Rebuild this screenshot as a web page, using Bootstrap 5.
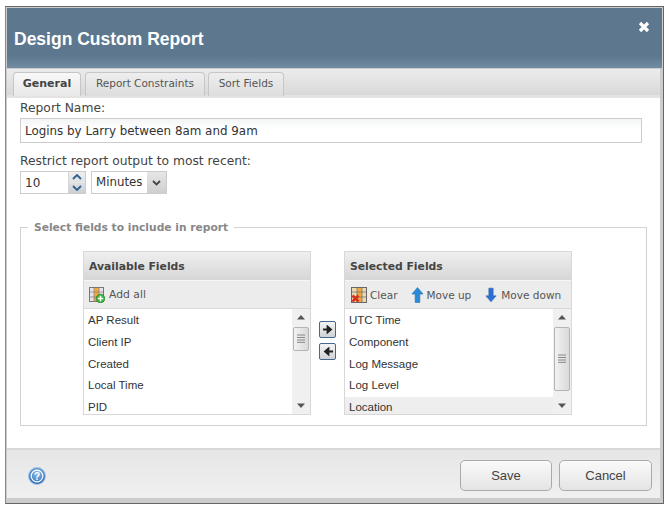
<!DOCTYPE html>
<html lang="en">
<head>
<meta charset="utf-8">
<title>Design Custom Report</title>
<link rel="stylesheet" href="https://cdn.jsdelivr.net/npm/bootstrap@5.3.0/dist/css/bootstrap.min.css">
<style>
html,body{background:#fff;margin:0;height:508px;overflow:hidden}
body{font-family:"DejaVu Sans",sans-serif;font-size:11.5px;color:#333;padding:6px 5px 0 5px}
.dlg-win{width:659px;height:498px;border:1px solid #666;border-left-color:#888;padding:1px 3px 4px 1px;background:#ccc}
.dlg-head{height:60px;margin-right:-2px;background:linear-gradient(#5c778e 0,#5c778e 80%,#718ca3 100%);color:#fff;padding:0 12px 0 7px}
.dlg-title{font:700 17.5px "Liberation Sans",sans-serif;margin:21px 0 0;line-height:20px}
.dlg-close{margin-top:11px;width:12px;height:16px}
.tab-bar{height:29px;padding:3px 0 0 6px;margin-top:1px;background:linear-gradient(#ececec,#d8d8d8);border-bottom:3px solid #e3e3e3;gap:3px}
.tab-bar .nav-link{height:24px;margin:0;border:1px solid #c6c6c6;border-bottom:0;border-radius:4px 4px 0 0;padding:0;width:120px;text-align:center;line-height:21px;font-size:10.500px;color:#555;background:linear-gradient(#eee,#ddd)}
.tab-bar .nav-link.active{font-weight:700;background:linear-gradient(#f8f8f8,#e8e8e8);color:#444;width:68px;font-size:11px;margin-right:1px}
.tab-bar .nav-link.tab-sort{width:76px}
.dlg-body{background:#fff;padding:0 12px 0 13px;height:350px}
.fld-label{display:block;font-size:12.300px;line-height:16px;margin:0;color:#444;height:20px;padding-top:2px}
.txt-field.form-control{height:25px;width:622px;border:1px solid #ccc;border-radius:0;padding:0 4px;font-size:11.900px;color:#333;background:linear-gradient(#f3f5f4,#fff 45%);box-shadow:none}
.report-label{margin-top:8px}
.spin-row{height:23px;margin-top:0;gap:5px}
.spin-box{width:66px;height:23px;border:1px solid #ccc}
.spin-in.form-control{width:47px;height:21px;border:0;border-radius:0;padding:0 4px;font-size:12px;color:#333}
.spin-btns{width:18px;border-left:1px solid #d5d5d5;background:linear-gradient(#efefef,#ccd0d3)}
.spin-btns button{flex:1;border:0;background:none;padding:0;display:flex;align-items:center;justify-content:center;line-height:0}
.spin-btns button+button{border-top:1px solid #e8e8e8}
.unit-sel.form-select{width:76px;height:23px;border:1px solid #ccc;border-radius:0;padding:1px 0 0 4px;font-size:11.800px;color:#333;background-color:#fff;background-repeat:no-repeat;background-image:url("data:image/svg+xml,%3Csvg xmlns='http://www.w3.org/2000/svg' width='9' height='6'%3E%3Cpath d='M1 1l3.500 3.500L8 1' fill='none' stroke='%23444' stroke-width='1.800'/%3E%3C/svg%3E"),linear-gradient(#e6e6e6,#cfcfcf);background-position:right 5px center,right top;background-size:9px 6px,19px 100%}
.field-set{margin:33px 0 0 0;width:627px;height:199px;border:1px solid #d2d2d2;padding:23px 0 0 62px;position:relative}
.field-cap{position:absolute;left:7px;top:-8px;margin:0;padding:0 6px;width:auto;float:none;background:#fff;font-size:10.700px;font-weight:700;color:#888;line-height:16px}
.pick-card.card{width:228px;height:164px;border:1px solid #d8d8d8;border-radius:0;background:#fff;overflow:hidden}
.pick-head.card-header{height:28px;border:0;border-radius:0;padding:1px 5px 0;line-height:28px;font-weight:700;font-size:10.800px;color:#444;background:linear-gradient(#efefef,#d6d6d6)}
.pick-tools{height:29px;border-top:1px solid #f6f6f6;border-bottom:1px solid #d8d8d8;background:#ececec;padding:1px 5px 0;color:#555;font-size:10.800px}
.pick-tools.sel-tools{padding:1px 0 0 6px;font-size:10.500px}
.tool-item{line-height:14px}
.tool-clear{gap:3px}
.tool-up{margin-left:14px;gap:2px}
.tool-down{margin-left:14px;gap:4px}
.pick-list{height:106px;overflow:hidden}
.pick-rows{list-style:none;margin:0;padding:1.500px 0 0;flex:1;min-width:0;overflow:hidden;font:11.500px/21.700px "Liberation Sans",sans-serif;color:#333}
.pick-rows li{padding:0 4px;height:21.700px}
.pick-rows li.is-on{background:#eee}
.fake-bar{width:18px;background:#f0f0f0;padding:0}
.bar-end{height:18px;line-height:0}
.bar-lane{flex:1;min-height:0}
.bar-thumb{width:16px;margin:0 auto;border:1px solid #b4b4b4;border-radius:2px;background:linear-gradient(90deg,#f2f2f2,#d9d9d9);display:flex;align-items:center;justify-content:center}
.move-col{width:17px;gap:5px;margin:70px 8px 0}
.move-btn{width:17px;height:17px;border:1px solid #46688f;border-radius:2px;padding:0;background:linear-gradient(#f4f4f4,#cfd3d6);line-height:0;display:flex;align-items:center;justify-content:center}
.dlg-foot{height:50px;background:linear-gradient(#e6e6e6,#f0f0f0);border-top:2px solid #d8d8d8;margin-top:0;padding:3px 8px 0 20px}
.foot-btn.btn{height:31px;padding:0;border:1px solid #aaa;border-radius:5px;font:13px "Liberation Sans",sans-serif;color:#444;background:linear-gradient(#fafafa,#e4e4e4)}
.btn-save{width:92px}
.btn-cancel{width:93px}
.foot-gap{gap:7px}
</style>
</head>
<body>
<div class="dlg-win d-flex flex-column">
  <div class="dlg-head d-flex justify-content-between align-items-start">
    <h1 class="dlg-title">Design Custom Report</h1>
    <svg class="dlg-close" viewBox="0 0 12 16" aria-label="Close"><path d="M2 4l8 8M10 4l-8 8" stroke="#fff" stroke-width="3.200" fill="none"/></svg>
  </div>
  <ul class="nav tab-bar">
    <li class="nav-item"><a class="nav-link active" href="#">General</a></li>
    <li class="nav-item"><a class="nav-link" href="#">Report Constraints</a></li>
    <li class="nav-item"><a class="nav-link tab-sort" href="#">Sort Fields</a></li>
  </ul>
  <div class="dlg-body">
    <label class="fld-label">Report Name:</label>
    <input class="form-control txt-field" value="Logins by Larry between 8am and 9am">
    <label class="fld-label report-label">Restrict report output to most recent:</label>
    <div class="d-flex spin-row">
      <div class="d-flex spin-box">
        <input class="form-control spin-in" value="10">
        <div class="spin-btns d-flex flex-column">
          <button type="button" aria-label="Up"><svg width="10" height="6"><path d="M1 5l4-4 4 4" fill="none" stroke="#2f5f8f" stroke-width="1.800"/></svg></button>
          <button type="button" aria-label="Down"><svg width="10" height="6"><path d="M1 1l4 4 4-4" fill="none" stroke="#2f5f8f" stroke-width="1.800"/></svg></button>
        </div>
      </div>
      <select class="form-select unit-sel"><option>Minutes</option></select>
    </div>
    <fieldset class="field-set">
      <legend class="field-cap">Select fields to include in report</legend>
      <div class="d-flex align-items-start">
        <div class="card pick-card">
          <div class="card-header pick-head">Available Fields</div>
          <div class="pick-tools d-flex align-items-center">
            <span class="tool-item d-flex align-items-center gap-1">
              <svg width="16" height="16" viewBox="0 0 16 16"><rect x=".5" y=".5" width="14" height="14" fill="#e4e4ee" stroke="#777"/><rect x="5" y="1" width="5" height="13" fill="#f5a63a"/><path d="M5 1v13M10 1v13M1 5h13M1 10h13" stroke="#888" stroke-width=".8"/><circle cx="11.500" cy="11.500" r="4.300" fill="#3fb83f" stroke="#1d7a1d" stroke-width=".7"/><path d="M11.500 8.800v5.400M8.800 11.500h5.400" stroke="#fff" stroke-width="1.500"/></svg>
              <span>Add all</span>
            </span>
          </div>
          <div class="pick-list d-flex">
            <ul class="pick-rows">
              <li>AP Result</li><li>Client IP</li><li>Created</li><li>Local Time</li><li>PID</li>
            </ul>
            <div class="fake-bar d-flex flex-column">
              <div class="bar-end d-flex align-items-center justify-content-center"><svg width="8" height="5"><path d="M0 4.500L4 0l4 4.500z" fill="#555"/></svg></div>
              <div class="bar-lane"><div class="bar-thumb" style="height:24px"><svg width="10" height="9"><path d="M1 1h8M1 3.500h8M1 6h8M1 8.300h8" stroke="#888"/></svg></div></div>
              <div class="bar-end d-flex align-items-center justify-content-center"><svg width="8" height="5"><path d="M0 .5L4 5l4-4.500z" fill="#555"/></svg></div>
            </div>
          </div>
        </div>
        <div class="move-col d-flex flex-column">
          <button type="button" class="move-btn" aria-label="Add"><svg width="10" height="9"><path d="M0 4.500h5M4.500 1.500l3.500 3-3.500 3z" stroke="#222" stroke-width="1.800" fill="#222"/></svg></button>
          <button type="button" class="move-btn" aria-label="Remove"><svg width="10" height="9"><path d="M10 4.500H5M5.500 1.500L2 4.500l3.500 3z" stroke="#222" stroke-width="1.800" fill="#222"/></svg></button>
        </div>
        <div class="card pick-card">
          <div class="card-header pick-head">Selected Fields</div>
          <div class="pick-tools sel-tools d-flex align-items-center">
            <span class="tool-item tool-clear d-flex align-items-center">
              <svg width="16" height="16" viewBox="0 0 16 16"><rect x=".5" y=".5" width="15" height="15" fill="#ecd9b0" stroke="#666"/><rect x="6" y="1" width="5" height="14" fill="#f5a63a"/><path d="M6 1v14M11 1v14M1 5h14M1 10h14" stroke="#777" stroke-width=".8"/><path d="M1.500 8.500l6 6M7.500 8.500l-6 6" stroke="#d8301f" stroke-width="2.600"/></svg>
              <span>Clear</span>
            </span>
            <span class="tool-item tool-up d-flex align-items-center">
              <svg width="13" height="16" viewBox="0 0 14 16"><path d="M7 0l6 7H9.500v9h-5V7H1z" fill="#2a8ad6" stroke="#1c6cb0" stroke-width=".6"/></svg>
              <span>Move up</span>
            </span>
            <span class="tool-item tool-down d-flex align-items-center">
              <svg width="12" height="16" viewBox="0 0 14 16"><path d="M7 16l6-7H9.500V0h-5v9H1z" fill="#2f6fd0" stroke="#1f55a8" stroke-width=".6"/></svg>
              <span>Move down</span>
            </span>
          </div>
          <div class="pick-list d-flex">
            <ul class="pick-rows">
              <li>UTC Time</li><li>Component</li><li>Log Message</li><li>Log Level</li><li class="is-on">Location</li>
            </ul>
            <div class="fake-bar d-flex flex-column">
              <div class="bar-end d-flex align-items-center justify-content-center"><svg width="8" height="5"><path d="M0 4.500L4 0l4 4.500z" fill="#555"/></svg></div>
              <div class="bar-lane"><div class="bar-thumb" style="height:64px"><svg width="10" height="9"><path d="M1 1h8M1 3.500h8M1 6h8M1 8.300h8" stroke="#888"/></svg></div></div>
              <div class="bar-end d-flex align-items-center justify-content-center"><svg width="8" height="5"><path d="M0 .5L4 5l4-4.500z" fill="#555"/></svg></div>
            </div>
          </div>
        </div>
      </div>
    </fieldset>
  </div>
  <div class="dlg-foot d-flex justify-content-between align-items-center">
    <svg width="20" height="20" viewBox="0 0 20 20" aria-label="Help"><defs><radialGradient id="hb" cx=".5" cy=".35" r=".7"><stop offset="0" stop-color="#8fc0ee"/><stop offset="1" stop-color="#1f5fae"/></radialGradient></defs><circle cx="10" cy="10" r="8.500" fill="url(#hb)" stroke="#a9c6e6"/><circle cx="10" cy="10" r="5.800" fill="none" stroke="#fff" stroke-width="1.200"/><text x="10" y="13.500" text-anchor="middle" font-family="Liberation Sans" font-weight="700" font-size="10" fill="#fff">?</text></svg>
    <div class="d-flex foot-gap">
      <button type="button" class="btn foot-btn btn-save">Save</button>
      <button type="button" class="btn foot-btn btn-cancel">Cancel</button>
    </div>
  </div>
</div>
</body>
</html>
